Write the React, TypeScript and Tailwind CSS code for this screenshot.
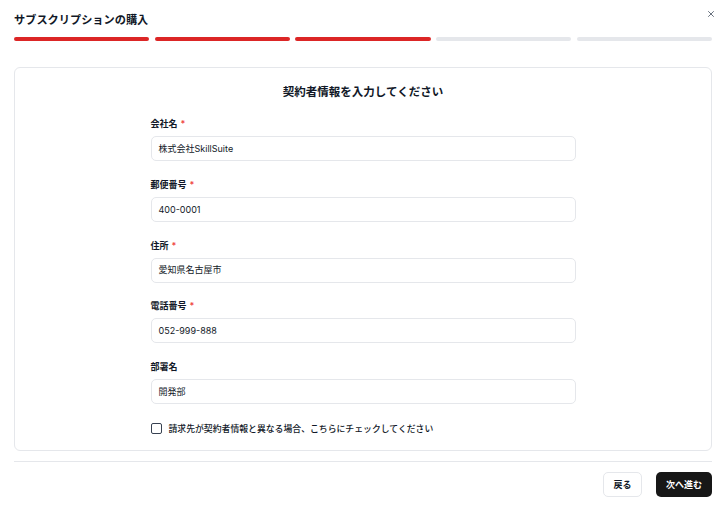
import { X } from 'lucide-react';

const steps = [true, true, true, false, false];

const fields = [
  { label: '会社名', value: '株式会社SkillSuite', required: true },
  { label: '郵便番号', value: '400-0001', required: true },
  { label: '住所', value: '愛知県名古屋市', required: true },
  { label: '電話番号', value: '052-999-888', required: true },
  { label: '部署名', value: '開発部', required: false },
];

export default function App() {
  return (
    <div
      className="relative w-[726px] h-[513px] bg-white text-[#111827] flex flex-col"
      style={{ fontFamily: 'Inter, "Noto Sans CJK JP", sans-serif' }}
    >
      <button className="absolute right-[10px] top-[9px] text-gray-600">
        <X size={10} strokeWidth={2} />
      </button>

      <div className="px-[14px] pt-[12px]">
        <h2 className="text-[11.2px] leading-[16px] font-bold">サブスクリプションの購入</h2>
        <div className="mt-[9px] flex gap-[5.5px]">
          {steps.map((done, i) => (
            <div key={i} className={`flex-1 h-[4px] rounded-full ${done ? 'bg-[#dc2626]' : 'bg-[#e5e7eb]'}`} />
          ))}
        </div>
      </div>

      <div className="mx-[14px] mt-[26px] h-[384px] border border-[#e5e7eb] rounded-[6px] pt-[15px]">
        <h3 className="text-center text-[11.5px] leading-[18px] font-bold">契約者情報を入力してください</h3>
        <div className="w-[425px] mx-auto mt-[16px] flex flex-col gap-[16.75px]">
          {fields.map(f => (
            <div key={f.label} className="flex flex-col gap-[5px]">
              <label className="text-[9px] leading-[14px] font-semibold">
                {f.label}
                {f.required && <span className="text-[#ef4444] ml-[3px]">*</span>}
              </label>
              <div className="h-[25px] border border-[#e5e7eb] rounded-[5px] px-[7px] flex items-center text-[9px]">
                {f.value}
              </div>
            </div>
          ))}
          <label className="mt-[1px] flex items-center gap-[7px] text-[8.85px] font-medium">
            <span className="w-[11px] h-[11px] border border-[#374151] rounded-[2px]" />
            請求先が契約者情報と異なる場合、こちらにチェックしてください
          </label>
        </div>
      </div>

      <div className="mx-[14px] mt-[10px] border-t border-[#e5e7eb] pt-[10px] flex justify-end gap-[14px]">
        <button className="h-[25px] px-[9.5px] border border-[#e5e7eb] rounded-[5px] text-[9px] font-semibold bg-white">
          戻る
        </button>
        <button className="h-[25px] px-[10px] rounded-[5px] text-[9px] font-semibold bg-[#171717] text-white">
          次へ進む
        </button>
      </div>
    </div>
  );
}
